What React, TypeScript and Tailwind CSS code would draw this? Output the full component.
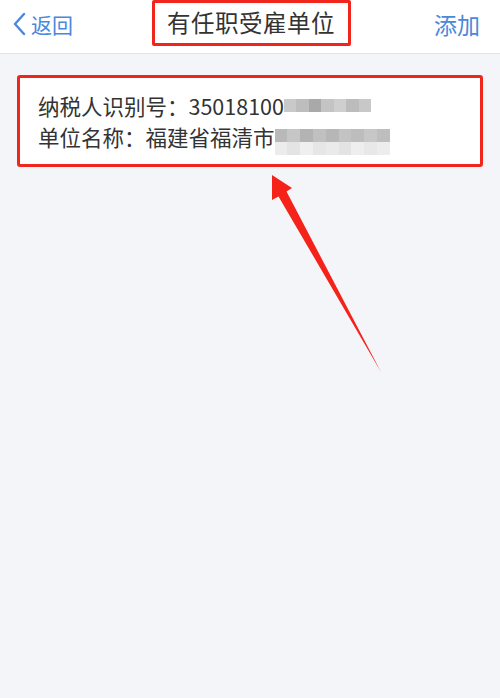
import React from 'react';

const font = { fontFamily: '"Noto Sans CJK SC", "Noto Sans", sans-serif' };

// mosaic cells hiding the rest of the number / company name
const idCells = ['#c9c9c9', '#bdbdbd', '#a9a9a9', '#c4c4c4', '#cfcfcf', '#bcbcbc', '#c8c8c8'];
const nameCells = [
  ['#b9b9b9', '#c6c6c6', '#b3b3b3', '#c0c0c0', '#b7b7b7', '#c3c3c3', '#bdbdbd', '#c7c7c7', '#bebebe'],
  ['#ececec', '#e4e4e4', '#efefef', '#e6e6e6', '#eaeaea', '#e3e3e3', '#eeeeee', '#e8e8e8', '#ededed'],
];

const Mosaic = ({ rows, cell }: { rows: string[][]; cell: number }) => (
  <span className="inline-flex flex-col align-middle blur-[0.6px]">
    {rows.map((row, i) => (
      <span key={i} className="flex">
        {row.map((c, j) => (
          <span key={j} style={{ width: cell, height: cell, background: c }} />
        ))}
      </span>
    ))}
  </span>
);

const App = () => {
  return (
    <div className="relative h-[698px] w-full overflow-hidden bg-[#f4f5f9] text-[#333]" style={font}>
      {/* Nav bar */}
      <div className="grid h-[54px] grid-cols-[1fr_auto_1fr] items-start border-b border-[#e3e4e8] bg-white">
        <div className="flex h-[48px] items-center pl-[12px] text-[#4a88dc]">
          <svg width="16" height="24" viewBox="0 0 16 24" className="mr-[3px]">
            <polyline points="12,2 3,12 12,22" fill="none" stroke="currentColor" strokeWidth="2.4" strokeLinecap="round" strokeLinejoin="round" />
          </svg>
          <span className="text-[21px] leading-none">返回</span>
        </div>
        <div className="ml-[2px] flex h-[46px] w-[199px] items-center justify-center rounded-[2px] border-[3px] border-[#f0261c]">
          <span className="text-[23.5px] leading-none tracking-[0.5px] text-[#333]">有任职受雇单位</span>
        </div>
        <div className="flex h-[48px] items-center justify-end pr-[20px] text-[23px] leading-none text-[#4a88dc]">添加</div>
      </div>

      {/* Employer card */}
      <div className="mx-[17px] mt-[21px] h-[92px] rounded-[3px] border-[3px] border-[#f0261c] bg-white pl-[18px] pt-[12px]">
        <div className="flex h-[31px] items-center text-[21.5px] leading-none">
          <span>纳税人识别号：35018100</span>
          <Mosaic rows={[idCells]} cell={12.5} />
        </div>
        <div className="flex h-[31px] items-center text-[21.5px] leading-none">
          <span>单位名称：福建省福清市</span>
          <span className="mt-[10px]">
            <Mosaic rows={nameCells} cell={12.8} />
          </span>
        </div>
      </div>

      {/* Pointer arrow */}
      <svg className="pointer-events-none absolute left-0 top-0" width="500" height="698">
        <polygon points="272,175 292,188 286.5,191.5 381,372 278.5,196.5 272,200" fill="#f5221a" />
      </svg>
    </div>
  );
};

export default App;
